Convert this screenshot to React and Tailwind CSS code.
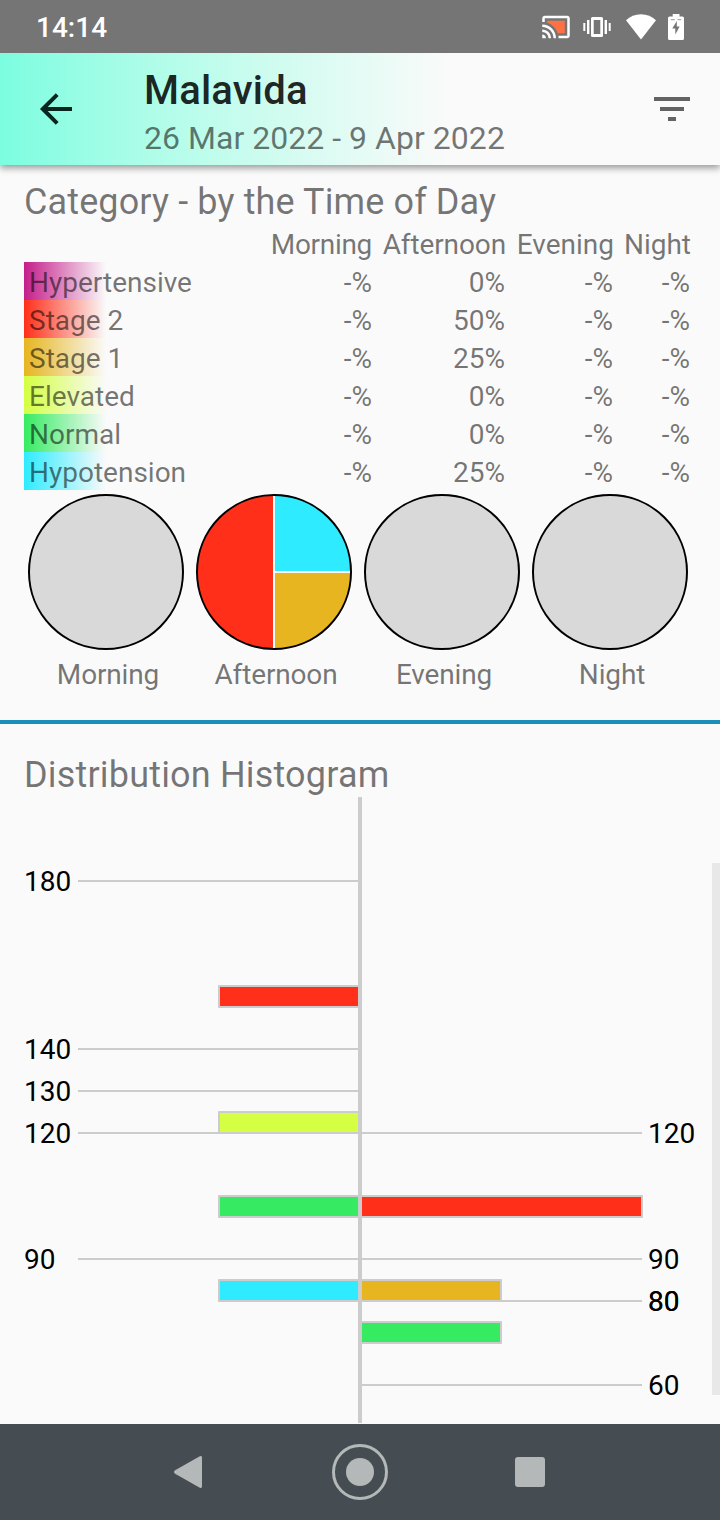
import React from "react";

const COLORS = {
  stage2: "#ff2f19",
  stage1: "#e6b520",
  elevated: "#d4ff42",
  normal: "#36eb62",
  hypotension: "#2eebff",
};

const PERIODS = ["Morning", "Afternoon", "Evening", "Night"];

const CATEGORIES = [
  { name: "Hypertensive", fade: "from-[#c41e8a] to-[#c41e8a]/0", afternoon: "0%" },
  { name: "Stage 2", fade: "from-[#ff2f19] to-[#ff2f19]/0", afternoon: "50%" },
  { name: "Stage 1", fade: "from-[#e6b520] to-[#e6b520]/0", afternoon: "25%" },
  { name: "Elevated", fade: "from-[#d4ff42] to-[#d4ff42]/0", afternoon: "0%" },
  { name: "Normal", fade: "from-[#36eb62] to-[#36eb62]/0", afternoon: "0%" },
  { name: "Hypotension", fade: "from-[#2eebff] to-[#2eebff]/0", afternoon: "25%" },
];

// Histogram scale: 10 mmHg = 42px, 180 sits at y = 84
const yOf = (value) => 84 + (180 - value) * 4.2;

const SYSTOLIC_TICKS = [180, 140, 130, 120, 90];
// 80 is the limit of two categories, so its label is drawn twice
const DIASTOLIC_TICKS = [120, 90, 80, 80, 60];

const SYSTOLIC_BARS = [
  { top: 155, count: 1, color: COLORS.stage2 },
  { top: 125, count: 1, color: COLORS.elevated },
  { top: 105, count: 1, color: COLORS.normal },
  { top: 85, count: 1, color: COLORS.hypotension },
];

const DIASTOLIC_BARS = [
  { top: 105, count: 2, color: COLORS.stage2 },
  { top: 85, count: 1, color: COLORS.stage1 },
  { top: 75, count: 1, color: COLORS.normal },
];

const StatusBar = () => (
  <div className="relative z-20 h-[53px] shrink-0 bg-[#757575] text-white flex items-center justify-between pl-9 pr-9">
    <span className="pt-0.5 text-[28px] font-medium leading-none">14:14</span>
    <div className="flex items-center">
      {/* Cast */}
      <svg width="30" height="30" viewBox="0 0 24 24" className="mr-3">
        <path
          fill="#ff7043"
          d="M19 7H5v1.63c3.96 1.28 7.09 4.41 8.37 8.37H19V7z"
        />
        <path
          fill="currentColor"
          d="M1 18v3h3c0-1.66-1.34-3-3-3zm0-4v2c2.76 0 5 2.24 5 5h2c0-3.87-3.13-7-7-7zm0-4v2c4.97 0 9 4.03 9 9h2c0-6.08-4.93-11-11-11zm20-7H3c-1.1 0-2 .9-2 2v3h2V5h18v14h-7v2h7c1.1 0 2-.9 2-2V5c0-1.1-.9-2-2-2z"
        />
      </svg>
      {/* Vibrate */}
      <svg width="28" height="28" viewBox="0 0 28 28" fill="currentColor" className="mr-[15px]">
        <rect x="0.3" y="10" width="2" height="8" />
        <rect x="4" y="7" width="2.4" height="14" />
        <path
          fillRule="evenodd"
          d="M9.5 4h9a1.5 1.5 0 0 1 1.5 1.5v17a1.5 1.5 0 0 1-1.5 1.5h-9a1.5 1.5 0 0 1-1.5-1.5v-17a1.5 1.5 0 0 1 1.5-1.5zm1.2 3v14h6.6v-14z"
        />
        <rect x="21.6" y="7" width="2.4" height="14" />
        <rect x="25.7" y="10" width="2" height="8" />
      </svg>
      {/* Wifi */}
      <svg width="30" height="26" viewBox="0 0 30 26" fill="currentColor" className="mr-3">
        <path d="M0 6.3C4 2.5 9.2 0.3 15 0.3S26 2.5 30 6.3L15 25.4z" />
      </svg>
      {/* Battery */}
      <svg width="16" height="26" viewBox="0 0 16 26">
        <path
          fill="currentColor"
          d="M4.7 0h6.8v2.6h3a1.5 1.5 0 0 1 1.5 1.5v20.4a1.5 1.5 0 0 1-1.5 1.5h-13a1.5 1.5 0 0 1-1.5-1.5v-20.4a1.5 1.5 0 0 1 1.5-1.5h3.2z"
        />
        <path fill="#757575" fillOpacity="0.6" d="M2.8 5h4v1.3h-4zM9.5 5h3.7v1.3H9.5z" />
        <path fill="#757575" d="M8.8 7L4.3 14.6h3v5.9l4.3-7.9h-2.8z" />
      </svg>
    </div>
  </div>
);

const Header = () => (
  <header className="relative z-10 h-28 shrink-0 flex items-center bg-[#fafafa] bg-linear-to-r from-[#7bfde0] to-[#fafafa] to-[450px] pl-8 pr-6 shadow-[0_3px_7px_rgba(0,0,0,0.4)]">
    <svg
      width="48"
      height="48"
      viewBox="0 0 48 48"
      fill="none"
      stroke="#08251f"
      strokeWidth="4"
    >
      <path d="M25.2 9.6L10.8 24l14.4 14.4M11 24h29" />
    </svg>
    <div className="ml-16 flex-1 pt-[11px]">
      <h1 className="text-[40px] font-medium leading-[47px] tracking-[0.2px] text-black/87">
        Malavida
      </h1>
      <p className="text-[32px] leading-[48px] tracking-[0.03px] text-black/54">
        26 Mar 2022 - 9 Apr 2022
      </p>
    </div>
    <svg width="48" height="48" viewBox="0 0 48 48" fill="#636363">
      <path d="M6 12h36v4H6zM12 22h24v4H12zM20 32h8v4h-8z" />
    </svg>
  </header>
);

const CategoryTable = () => (
  <div className="grid grid-cols-[353px_134px_108px_77px] auto-rows-[38px] text-[28px] leading-[42px] text-right">
    {PERIODS.map((period) => (
      <span
        key={period}
        className="pr-[5px] whitespace-nowrap first:tracking-[-0.3px] nth-2:tracking-[-0.12px]"
      >
        {period}
      </span>
    ))}
    {CATEGORIES.map((category) => (
      <React.Fragment key={category.name}>
        <div className="flex justify-between pr-[5px]">
          <span
            className={`bg-linear-to-r to-[82px] pl-[5px] ${category.fade}`}
          >
            {category.name}
          </span>
          <span>-%</span>
        </div>
        <span className="pr-[6px]">{category.afternoon}</span>
        <span className="pr-[6px]">-%</span>
        <span className="pr-[6px]">-%</span>
      </React.Fragment>
    ))}
  </div>
);

const Pie = ({ filled }) => (
  <svg width="156" height="156" viewBox="0 0 156 156" className="ml-1">
    <circle cx="78" cy="78" r="77" fill="#d9d9d9" />
    {filled && (
      <>
        <path d="M78 78V1a77 77 0 0 0 0 154z" fill={COLORS.stage2} />
        <path d="M78 78V1a77 77 0 0 1 77 77z" fill={COLORS.hypotension} />
        <path d="M78 78h77a77 77 0 0 1-77 77z" fill={COLORS.stage1} />
        <path d="M78 1v154M78 78h77" stroke="white" strokeWidth="2" />
      </>
    )}
    <circle cx="78" cy="78" r="77" fill="none" stroke="black" strokeWidth="2" />
  </svg>
);

const Histogram = () => (
  <svg
    width="720"
    height="626"
    viewBox="0 0 720 626"
    fontSize="28"
    className="block"
  >
    {SYSTOLIC_TICKS.map((tick) => (
      <g key={tick}>
        <path d={`M78 ${yOf(tick)}H360`} stroke="#ccc" strokeWidth="2" />
        <text x="24" y={yOf(tick) + 10}>
          {tick}
        </text>
      </g>
    ))}
    {DIASTOLIC_TICKS.map((tick, i) => (
      <g key={i}>
        <path d={`M360 ${yOf(tick)}H642`} stroke="#ccc" strokeWidth="2" />
        <text x="648" y={yOf(tick) + 10}>
          {tick}
        </text>
      </g>
    ))}
    {SYSTOLIC_BARS.map((bar) => (
      <rect
        key={bar.top}
        x={360 - bar.count * 141}
        y={yOf(bar.top)}
        width={bar.count * 141}
        height="21"
        fill={bar.color}
        stroke="#ccc"
        strokeWidth="2"
        strokeLinejoin="round"
      />
    ))}
    {DIASTOLIC_BARS.map((bar) => (
      <rect
        key={bar.top}
        x="360"
        y={yOf(bar.top)}
        width={bar.count * 141}
        height="21"
        fill={bar.color}
        stroke="#ccc"
        strokeWidth="2"
        strokeLinejoin="round"
      />
    ))}
    <rect x="358" y="0" width="4" height="626" fill="#ccc" />
  </svg>
);

const NavBar = () => (
  <nav className="h-24 shrink-0 bg-[#454d52] flex items-center pl-[173px]">
    <svg width="30" height="34" viewBox="0 0 30 34" fill="#b4b8b9">
      <path d="M1.7 15.4L26.8 1.2Q29 0.5 29 2.5V31.5Q29 33.5 26.8 32.8L1.7 18.6Q0 17 1.7 15.4z" />
    </svg>
    <svg width="56" height="56" viewBox="0 0 56 56" fill="#b4b8b9" className="ml-[129px] mr-[127px]">
      <circle cx="28" cy="28" r="26.5" fill="none" stroke="#b4b8b9" strokeWidth="3" />
      <circle cx="28" cy="28" r="14" />
    </svg>
    <div className="size-[30px] rounded-[3px] bg-[#b4b8b9]" />
  </nav>
);

const App = () => {
  return (
    <div
      className="w-[720px] h-[1520px] flex flex-col overflow-hidden bg-[#fafafa]"
      style={{ fontFamily: "Roboto, sans-serif" }}
    >
      <StatusBar />
      <Header />

      <main className="relative flex-1 min-h-0 overflow-hidden">
        <section className="h-[555px] px-6 pt-[13px] text-black/54">
          <h2 className="text-[36px] leading-[48px] tracking-[0.12px] -mb-0.5">
            Category - by the Time of Day
          </h2>
          <CategoryTable />
          <div className="grid grid-cols-4 mt-1">
            {PERIODS.map((period) => (
              <div key={period} className="flex flex-col">
                <Pie filled={period === "Afternoon"} />
                <span className="mt-1.5 text-[28px] leading-[38px] tracking-[-0.15px] text-center">
                  {period}
                </span>
              </div>
            ))}
          </div>
        </section>

        <div className="h-1 bg-[#1a8fb8]" />

        <section className="pt-7">
          <h2 className="px-6 text-[36px] leading-[46px] tracking-[0.18px] -mb-px text-black/54">
            Distribution Histogram
          </h2>
          <Histogram />
        </section>

        {/* Scroll thumb */}
        <div className="absolute right-0 top-[698px] w-2 h-[532px] bg-[#e8e8e8]" />
      </main>

      <NavBar />
    </div>
  );
};

export default App;
